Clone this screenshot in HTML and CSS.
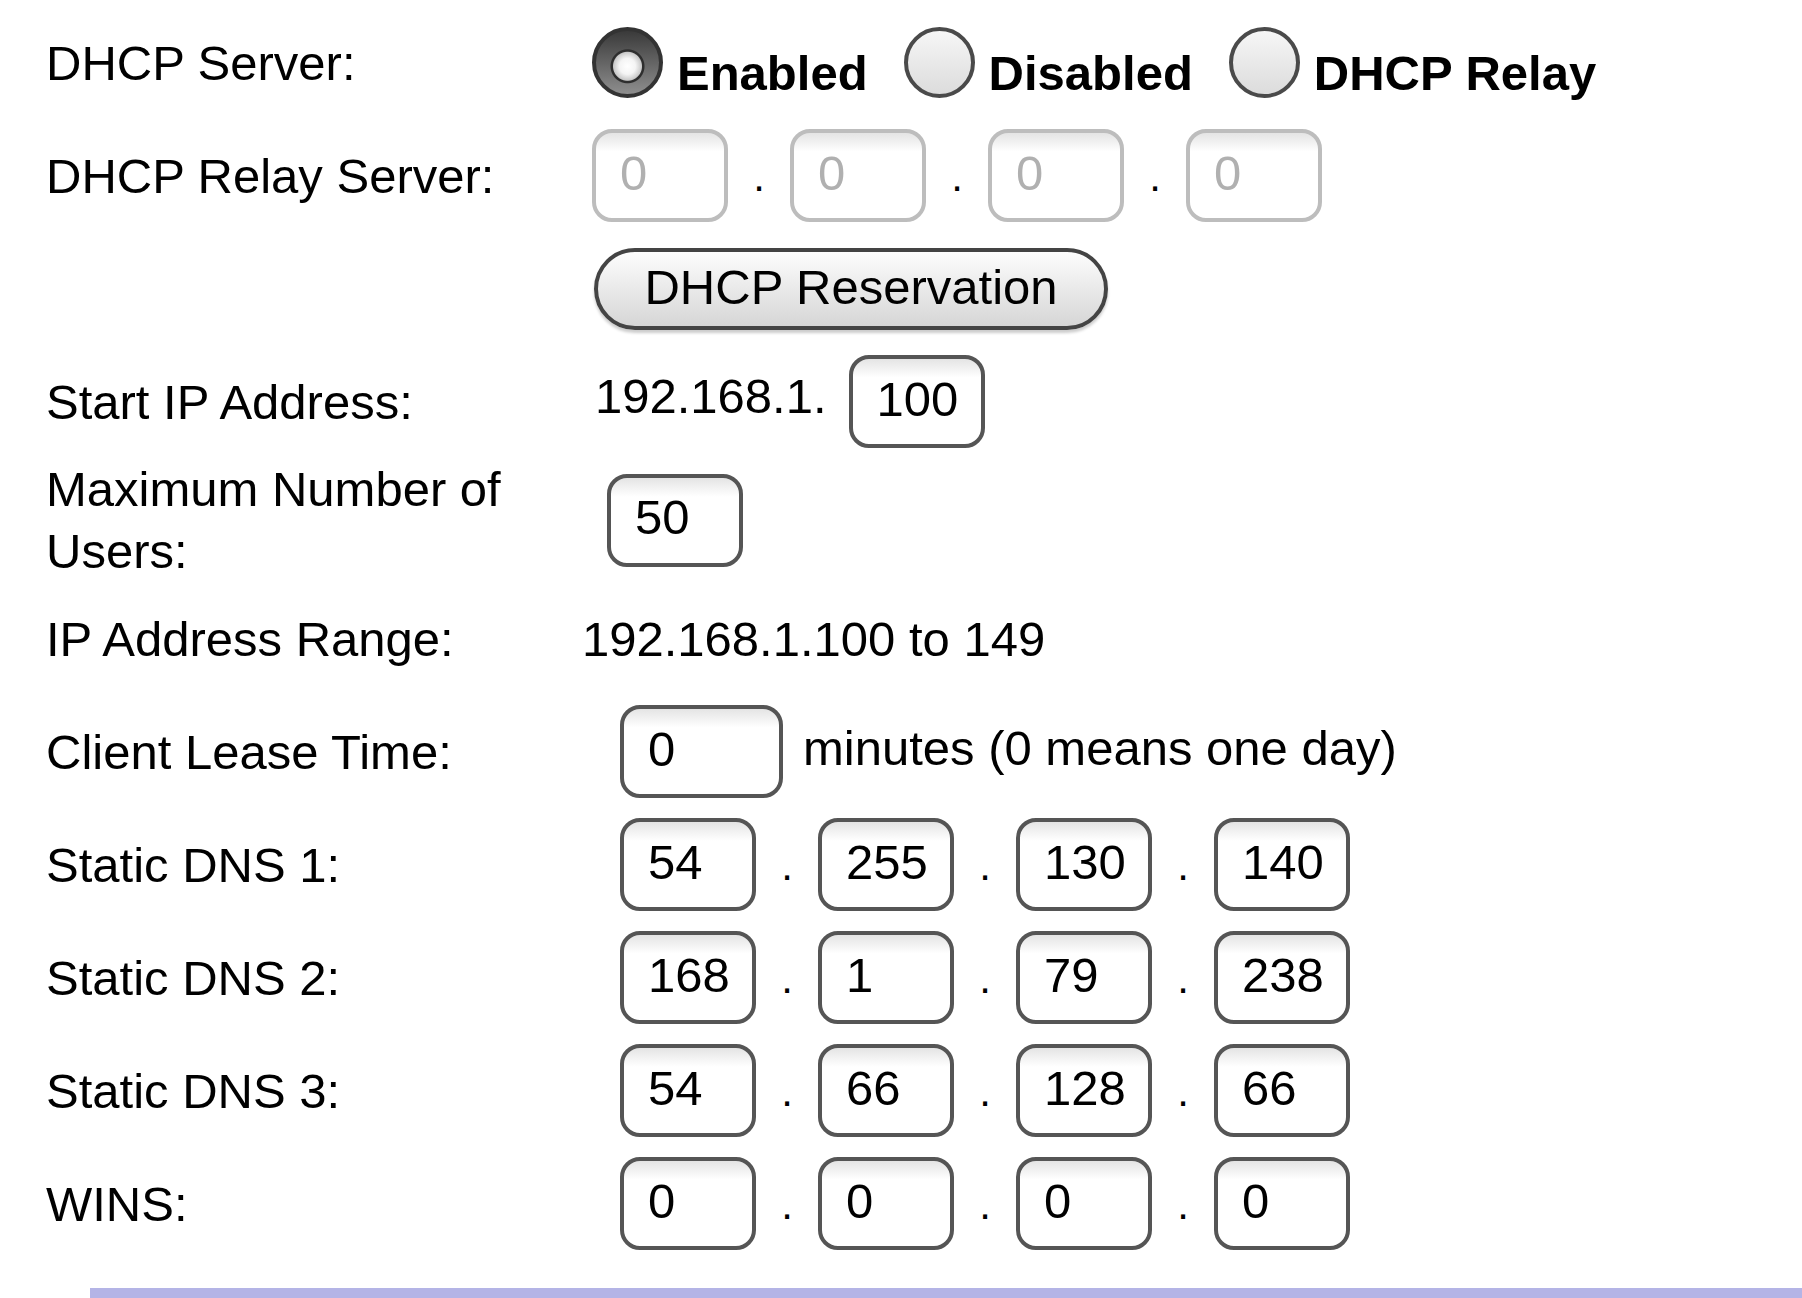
FILE: index.html
```html
<!DOCTYPE html>
<html lang="en">
<head>
    <meta charset="UTF-8">
    <meta name="viewport" content="width=device-width, initial-scale=1.0">
    <title>DHCP Server Settings</title>
    <link rel="stylesheet" href="styles.css">
</head>
<body>
    <div class="form">
        <div class="row">
            <div class="label">DHCP Server:</div>
            <div class="value radios">
                <label class="option"><input type="radio" name="dhcp" class="radio" checked><span>Enabled</span></label>
                <label class="option"><input type="radio" name="dhcp" class="radio"><span>Disabled</span></label>
                <label class="option"><input type="radio" name="dhcp" class="radio"><span>DHCP Relay</span></label>
            </div>
        </div>
        <div class="row">
            <div class="label">DHCP Relay Server:</div>
            <div class="value ip">
                <input type="text" class="field" value="0" disabled>
                <span class="dot">.</span>
                <input type="text" class="field" value="0" disabled>
                <span class="dot">.</span>
                <input type="text" class="field" value="0" disabled>
                <span class="dot">.</span>
                <input type="text" class="field" value="0" disabled>
            </div>
        </div>
        <div class="row">
            <div class="label"></div>
            <div class="value">
                <button class="pill-button">DHCP Reservation</button>
            </div>
        </div>
        <div class="row">
            <div class="label">Start IP Address:</div>
            <div class="value">
                <span class="prefix">192.168.1.</span>
                <input type="text" class="field" value="100">
            </div>
        </div>
        <div class="row row-tall">
            <div class="label">Maximum Number of Users:</div>
            <div class="value shift-small">
                <input type="text" class="field" value="50">
            </div>
        </div>
        <div class="row">
            <div class="label">IP Address Range:</div>
            <div class="value shift-back">192.168.1.100 to 149</div>
        </div>
        <div class="row">
            <div class="label">Client Lease Time:</div>
            <div class="value shift">
                <input type="text" class="field field-wide" value="0">
                <span class="note">minutes (0 means one day)</span>
            </div>
        </div>
        <div class="row">
            <div class="label">Static DNS 1:</div>
            <div class="value ip shift">
                <input type="text" class="field" value="54">
                <span class="dot">.</span>
                <input type="text" class="field" value="255">
                <span class="dot">.</span>
                <input type="text" class="field" value="130">
                <span class="dot">.</span>
                <input type="text" class="field" value="140">
            </div>
        </div>
        <div class="row">
            <div class="label">Static DNS 2:</div>
            <div class="value ip shift">
                <input type="text" class="field" value="168">
                <span class="dot">.</span>
                <input type="text" class="field" value="1">
                <span class="dot">.</span>
                <input type="text" class="field" value="79">
                <span class="dot">.</span>
                <input type="text" class="field" value="238">
            </div>
        </div>
        <div class="row">
            <div class="label">Static DNS 3:</div>
            <div class="value ip shift">
                <input type="text" class="field" value="54">
                <span class="dot">.</span>
                <input type="text" class="field" value="66">
                <span class="dot">.</span>
                <input type="text" class="field" value="128">
                <span class="dot">.</span>
                <input type="text" class="field" value="66">
            </div>
        </div>
        <div class="row">
            <div class="label">WINS:</div>
            <div class="value ip shift">
                <input type="text" class="field" value="0">
                <span class="dot">.</span>
                <input type="text" class="field" value="0">
                <span class="dot">.</span>
                <input type="text" class="field" value="0">
                <span class="dot">.</span>
                <input type="text" class="field" value="0">
            </div>
        </div>
    </div>
    <div class="footer-bar"></div>
</body>
</html>
```

FILE: styles.css
```css
body {
    font-family: 'Liberation Sans', Arial, sans-serif;
    font-size: 49px;
    color: #000;
    background: #fff;
    margin: 0;
    padding: 0;
    overflow: hidden;
}
.form {
    padding-top: 6px;
}
.row {
    display: flex;
    align-items: center;
    min-height: 113px;
}
.row-tall {
    min-height: 123px;
}
.label {
    width: 546px;
    padding-left: 46px;
    flex-shrink: 0;
    line-height: 62px;
}
.value {
    display: flex;
    align-items: center;
    white-space: nowrap;
}
.shift {
    margin-left: 28px;
}
.shift-small {
    margin-left: 15px;
}
.shift-back {
    margin-left: -10px;
}
.radios {
    gap: 36px;
}
.option {
    display: flex;
    align-items: center;
    gap: 14px;
    font-weight: bold;
}
.option span {
    padding-top: 20px;
}
.radio {
    appearance: none;
    -webkit-appearance: none;
    width: 71px;
    height: 71px;
    margin: 0;
    box-sizing: border-box;
    border: 4px solid #4a4a4a;
    border-radius: 50%;
    background: linear-gradient(#f6f6f6, #dcdcdc);
}
.radio:checked {
    border-color: #333;
    background:
        radial-gradient(circle at 50% 56%, #fff 0, #f4f4f4 8px, #c8c8c8 14px, #2e2e2e 15px, #2e2e2e 16.5px, transparent 17.5px),
        linear-gradient(#3a3a3a, #8e8e8e);
}
.field {
    width: 136px;
    height: 93px;
    box-sizing: border-box;
    border: 4px solid #555;
    border-radius: 20px;
    padding: 0 0 6px 24px;
    margin: 0;
    font-family: inherit;
    font-size: 49px;
    color: #000;
    background: linear-gradient(#e4e4e4, #fff 22%);
    outline: none;
}
.field:disabled {
    border-color: #bdbdbd;
    color: #b0b0b0;
    -webkit-text-fill-color: #b0b0b0;
}
.field-wide {
    width: 163px;
}
.dot {
    width: 62px;
    text-align: center;
    font-size: 42px;
    padding-top: 2px;
}
.prefix {
    margin-left: 3px;
    margin-right: 22px;
    margin-top: -12px;
}
.note {
    margin-left: 20px;
    margin-top: -8px;
}
.pill-button {
    width: 514px;
    height: 82px;
    margin-left: 2px;
    border: 4px solid #444;
    border-radius: 41px;
    background: linear-gradient(#fdfdfd, #d6d6d6);
    box-shadow: 0 3px 3px rgba(0, 0, 0, 0.2);
    font-family: inherit;
    font-size: 49px;
    color: #000;
    padding: 0 0 4px;
}
.footer-bar {
    margin-top: 28px;
    margin-left: 90px;
    height: 12px;
    background: #b4b4e6;
}
```
